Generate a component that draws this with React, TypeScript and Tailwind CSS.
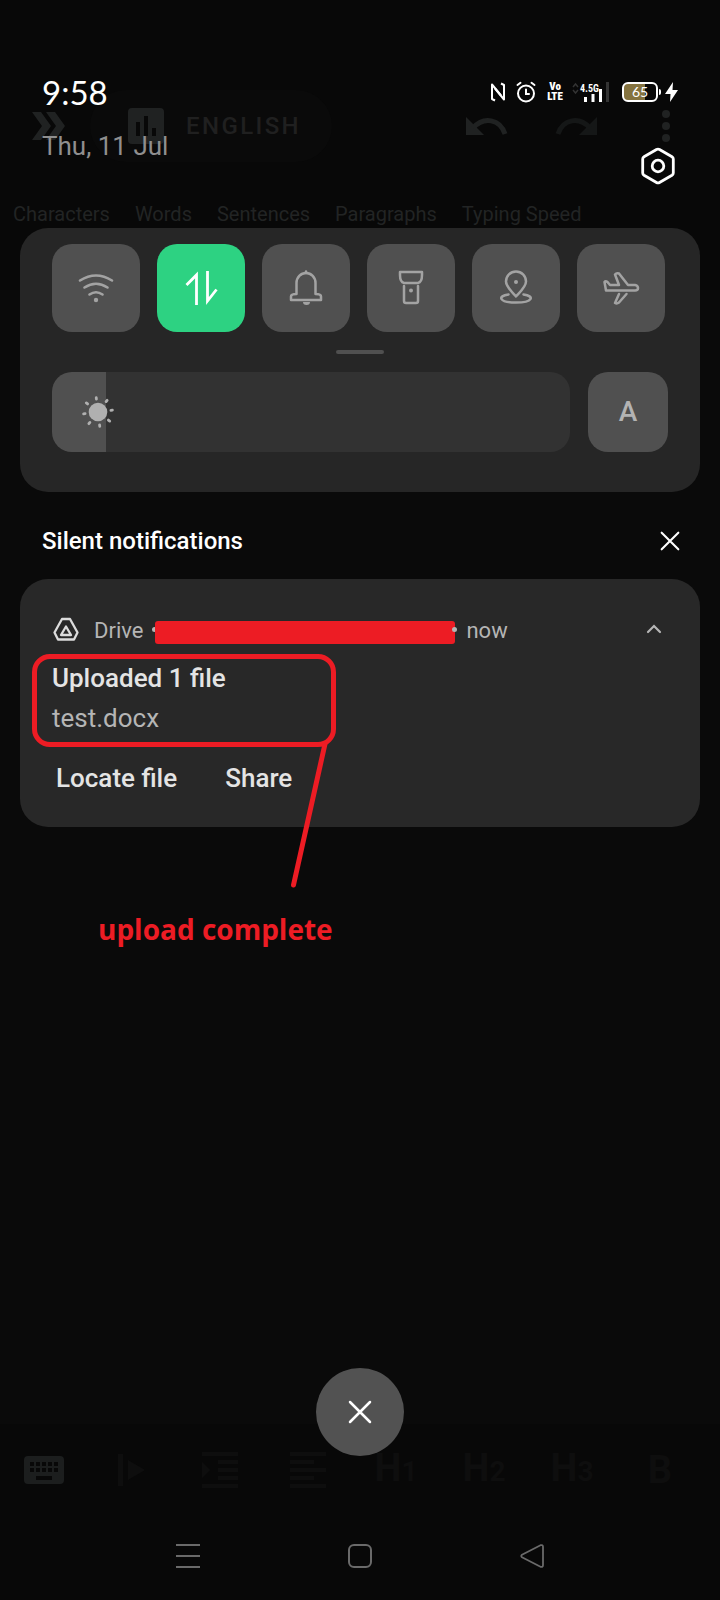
import { useState } from "react";
import type { ReactNode } from "react";

const quickTiles: { label: string; active?: boolean; icon: ReactNode }[] = [
  {
    label: "Wi-Fi",
    icon: (
      <g strokeWidth="2.600">
        <path d="M4 12.500 Q20 2.500 36 12.500" />
        <path d="M8.500 19.500 Q20 12 31.500 19.500" />
        <path d="M13.500 26.500 Q20 22 26.500 26.500" />
        <circle cx="20" cy="32" r="2.200" fill="currentColor" stroke="none" />
      </g>
    ),
  },
  {
    label: "Mobile data",
    active: true,
    icon: (
      <g strokeWidth="2.800" strokeLinecap="butt" strokeLinejoin="miter">
        <path d="M5.500 17 L15.500 7 V37" />
        <path d="M26.500 3 V33 L35.500 21.500" />
      </g>
    ),
  },
  {
    label: "Ring",
    icon: (
      <g>
        <path d="M10.500 26 V15 a9.500 10 0 0 1 19 0 V26 q5.500 0 5.500 2.500 V32 H5 V28.500 q0 -2.500 5.500 -2.500" />
        <path d="M20 3.500 V5" />
        <path d="M17 34 h7 a3.500 3 0 0 1 -7 0z" fill="currentColor" stroke="none" />
      </g>
    ),
  },
  {
    label: "Flashlight",
    icon: (
      <g>
        <path d="M9 4 H31 V7 Q31 14 27 15 H13 Q9 14 9 7 Z" />
        <path d="M13 18 V33 q0 2 2 2 H25 q2 0 2 -2 V18" />
        <circle cx="20" cy="22.500" r="2" fill="currentColor" stroke="none" />
      </g>
    ),
  },
  {
    label: "Location",
    icon: (
      <g>
        <path d="M20 28.500 C15 23 10 18.500 10 13.500 a10 10 0 0 1 20 0 C30 18.500 25 23 20 28.500 Z" />
        <circle cx="20" cy="14" r="2" fill="currentColor" stroke="none" />
        <path d="M12.500 26.500 C1 28 3 34.500 20 34.500 S39 28 27.500 26.500" />
      </g>
    ),
  },
  {
    label: "Airplane mode",
    icon: (
      <g>
        <path d="M5 22.500 L3.500 14 Q4.500 12.500 6.500 14 L9 17 H18 L14 6.500 Q15.500 4.500 18 5.500 L27 17 H34 Q37 17.500 37 20 T34 22.500 Z" />
        <path d="M18 26 L14 35 Q16 36 18 34.500 L25.500 26" />
      </g>
    ),
  },
];

const statTabs = ["Characters", "Words", "Sentences", "Paragraphs", "Typing Speed"];

function Cross({ className }: { className: string }) {
  return (
    <svg viewBox="0 0 24 24" className={className} fill="none" stroke="currentColor" strokeWidth="2.500" strokeLinecap="round" aria-hidden="true">
      <path d="M2 2 L22 22 M22 2 L2 22" />
    </svg>
  );
}

/* Editor dimmed behind the notification shade */
function DimmedEditor() {
  return (
    <div className="absolute inset-0 flex flex-col" aria-hidden="true">
      <div className="h-[290px] bg-[#080808] pt-[90px]">
        <div className="flex h-[72px] items-center pl-8">
          <svg viewBox="0 0 34 28" className="h-7 w-[34px] shrink-0" fill="#202222">
            <path d="M0 0 H9 L19 14 L9 28 H0 L10 14 Z M14 0 H23 L33 14 L23 28 H14 L24 14 Z" />
          </svg>
          <div className="ml-6 flex h-[72px] w-[242px] items-center rounded-full bg-[#0a0a0a] pl-[38px]">
            <svg viewBox="0 0 36 36" className="size-9 shrink-0">
              <rect width="36" height="36" rx="4" fill="#202222" />
              <path d="M8 14h4v14H8z M16 8h4v20h-4z M24 20h4v8h-4z" fill="#080808" />
            </svg>
            <span className="ml-[22px] text-2xl font-medium tracking-widest text-[#202020]">ENGLISH</span>
          </div>
          <svg viewBox="0 0 42 20" className="ml-auto h-5 w-[42px] shrink-0" fill="none">
            <path d="M0 1 V19 H18 Z" fill="#202222" />
            <path d="M7 12 C18 0 34 3 39 18" stroke="#202222" strokeWidth="5" />
          </svg>
          <svg viewBox="0 0 42 20" className="ml-[47px] h-5 w-[42px] shrink-0" fill="none">
            <path d="M42 1 V19 H24 Z" fill="#151717" />
            <path d="M35 12 C24 0 8 3 3 18" stroke="#151717" strokeWidth="5" />
          </svg>
          <svg viewBox="0 0 8 32" className="mr-[50px] ml-[65px] h-8 w-2 shrink-0" fill="#202222">
            <circle cx="4" cy="4" r="4" />
            <circle cx="4" cy="16" r="4" />
            <circle cx="4" cy="28" r="4" />
          </svg>
        </div>
        <div className="mt-10 flex gap-[25px] pl-[13px] text-xl leading-6 whitespace-nowrap text-[#222424]">
          {statTabs.map((t) => (
            <span key={t}>{t}</span>
          ))}
        </div>
      </div>
      <div className="flex-1" />
      <div className="h-[176px] bg-[#080808] pt-6 pr-4">
        <div className="grid h-10 grid-cols-8 place-items-center leading-10 text-[#0e0e0e]">
          <svg viewBox="0 0 40 28" className="h-7 w-10">
            <rect width="40" height="28" rx="4" fill="#1c1e1e" />
            <path d="M6 8H34 M6 14H34" stroke="#080808" strokeWidth="4" strokeDasharray="4 2" />
            <path d="M12 22H28" stroke="#080808" strokeWidth="4" />
          </svg>
          <svg viewBox="0 0 28 32" className="h-8 w-7" fill="currentColor">
            <path d="M0 0h5v32H0z M10 6 L27 16 L10 26z" />
          </svg>
          <svg viewBox="0 0 36 36" className="size-9" fill="currentColor">
            <path d="M0 0h36v4H0z M16 8h20v4H16z M16 16h20v4H16z M16 24h20v4H16z M0 32h36v4H0z M0 10l8 8-8 8z" />
          </svg>
          <svg viewBox="0 0 36 36" className="size-9" fill="currentColor">
            <path d="M0 0h36v4H0z M0 8h24v4H0z M0 16h36v4H0z M0 24h24v4H0z M0 32h36v4H0z" />
          </svg>
          {["1", "2", "3"].map((n) => (
            <span key={n} className="flex items-baseline text-[38px] font-bold">
              H<span className="text-[28px]">{n}</span>
            </span>
          ))}
          <span className="text-[38px] font-bold">B</span>
        </div>
      </div>
    </div>
  );
}

function StatusIcons() {
  return (
    <div className="flex items-center text-white">
      <svg viewBox="0 0 16 20" className="h-5 w-4" fill="none" stroke="currentColor" strokeWidth="2" strokeLinejoin="round" aria-label="NFC">
        <path d="M5 18.500 L2 17 V2.500 L11 13.500" />
        <path d="M11 1.500 L14 3 V17.500 L5 6.500" />
      </svg>
      <svg viewBox="0 0 20 22" className="ml-2.5 h-[22px] w-5" fill="none" stroke="currentColor" strokeWidth="2" strokeLinecap="round" aria-label="Alarm">
        <circle cx="10" cy="12.500" r="8" />
        <path d="M10 8.500 V13 H13 M1.500 4 L4.500 1.800 M18.500 4 L15.500 1.800" />
      </svg>
      <span className="ml-2.5 flex w-[18px] flex-col items-center font-['Roboto_Condensed','Roboto',sans-serif] text-[11px] leading-[10px] font-black">
        <span>Vo</span>
        <span>LTE</span>
      </span>
      <span className="relative ml-2 h-5 w-[38px]">
        <svg viewBox="0 0 38 20" className="h-5 w-[38px]" aria-label="Signal strength">
          <path d="M1 5 L3.500 2 L6 5 M1 8 L3.500 11 L6 8" fill="none" stroke="#333" strokeWidth="1.500" />
          <path d="M12 15h3v5h-3z M19.500 12h3v8h-3z M27 7h3v13h-3z" fill="currentColor" />
          <path d="M34 0h3v20h-3z" fill="#333" />
        </svg>
        <span className="absolute top-0.5 left-2 font-['Roboto_Condensed','Roboto',sans-serif] text-[10px] leading-[10px] font-bold">4.5G</span>
      </span>
      <span className="relative ml-3 flex h-5 w-9 items-center justify-center rounded-md border-2 border-white bg-[linear-gradient(to_right,#85733f_65%,#080808_65%)] font-['Lato',sans-serif] text-sm leading-4">
        65
      </span>
      <span className="ml-px h-1.5 w-0.5 rounded-r bg-white" />
      <svg viewBox="0 0 13 20" className="ml-1 h-5 w-[13px]" fill="currentColor" aria-label="Charging">
        <path d="M8 0 L0 12 H5.500 L5 20 L13 8 H7.500 Z" />
      </svg>
    </div>
  );
}

export default function App() {
  const [brightness, setBrightness] = useState(10.4);

  return (
    <div className="relative min-h-screen overflow-hidden bg-[#0a0a0a] font-['Roboto',sans-serif]">
      <DimmedEditor />
      <main className="relative flex min-h-screen flex-col">
        <header className="h-[228px] px-[42px] pt-[72px]">
          <div className="flex h-10 items-center justify-between">
            <time className="font-['Lato',sans-serif] text-[33px] leading-10 text-white">9:58</time>
            <StatusIcons />
          </div>
          <div className="mt-[18px] flex items-start justify-between">
            <p className="text-[26px] leading-8 text-[#8f8f8f]">Thu, 11 Jul</p>
            <button type="button" aria-label="Settings" className="mt-4 text-white">
              <svg viewBox="0 0 40 40" className="size-10" fill="none" stroke="currentColor" strokeWidth="2.800" strokeLinejoin="round">
                <path d="M18.500 3.500 Q20 2.600 21.500 3.500 L34 10.800 Q35.300 11.600 35.300 13 V27 Q35.300 28.400 34 29.200 L21.500 36.500 Q20 37.400 18.500 36.500 L6 29.200 Q4.700 28.400 4.700 27 V13 Q4.700 11.600 6 10.800 Z" />
                <circle cx="20" cy="20" r="5.800" />
              </svg>
            </button>
          </div>
        </header>

        <section aria-label="Quick settings" className="mx-5 rounded-[28px] bg-[#262626] px-8 pt-4 pb-10">
          <div className="grid grid-cols-6 gap-[17px] pr-[3px]">
            {quickTiles.map((t) => (
              <button
                key={t.label}
                type="button"
                aria-label={t.label}
                aria-pressed={!!t.active}
                className={`flex h-[88px] items-center justify-center rounded-[20px] ${
                  t.active ? "bg-[#2dd282] text-white" : "bg-[#505050] text-[#a3a3a3]"
                }`}
              >
                <svg viewBox="0 0 40 40" className="size-10" fill="none" stroke="currentColor" strokeWidth="2.500" strokeLinecap="round" strokeLinejoin="round">
                  {t.icon}
                </svg>
              </button>
            ))}
          </div>
          <div className="mx-auto mt-[18px] h-1 w-12 rounded-sm bg-[#505050]" />
          <div className="mt-[18px] flex gap-[18px]">
            <div className="relative h-20 flex-1">
              <input
                type="range"
                aria-label="Brightness"
                min="0"
                max="100"
                step="0.1"
                value={brightness}
                onChange={(e) => setBrightness(Number(e.target.value))}
                className="block h-20 w-full appearance-none rounded-[20px] [&::-webkit-slider-thumb]:opacity-0"
                style={{ background: `linear-gradient(to right, #505050 ${brightness}%, #323232 ${brightness}%)` }}
              />
              <svg viewBox="0 0 36 36" className="pointer-events-none absolute top-[22px] left-7 size-9" fill="none" stroke="#b0b0b0" strokeWidth="2.800" strokeLinecap="round">
                <circle cx="18" cy="18" r="9.300" fill="#b0b0b0" stroke="none" />
                <path
                  d="M18 5V3.500 M18 31V32.500 M5 18H3.500 M31 18H32.500 M8.700 8.700L7.500 7.500 M27.300 27.300L28.500 28.500 M8.700 27.300L7.500 28.500 M27.300 8.700L28.500 7.500"
                  transform="rotate(-7 18 18)"
                />
              </svg>
            </div>
            <button type="button" aria-label="Auto brightness" className="size-20 rounded-[20px] bg-[#505050] text-[28px] font-medium text-[#b3b3b3]">
              A
            </button>
          </div>
        </section>

        <div className="flex h-[87px] items-center justify-between pt-2.5 pr-[34px] pl-[42px] text-white">
          <h2 className="text-2xl font-medium">Silent notifications</h2>
          <button type="button" aria-label="Clear silent notifications" className="flex size-8 items-center justify-center">
            <Cross className="size-5" />
          </button>
        </div>

        <article className="mx-5 rounded-[28px] bg-[#282828] px-8 pt-[34px] pb-[29px]">
          <div className="flex h-8 items-center text-[22px] leading-8 text-[#b5b5b5]">
            <svg viewBox="0 0 26 24" className="ml-px h-6 w-[26px]" fill="none" stroke="#dcdcdc" strokeWidth="2.300" strokeLinejoin="round" aria-hidden="true">
              <path d="M9 2 H17 L24.500 15.500 L21 22.500 H5 L1.500 15.500 Z" />
              <path d="M13 9.500 L18 18 H8 Z" />
            </svg>
            <span className="mt-1 ml-[15px]">Drive</span>
            <span className="ml-[9px] size-[5px] rounded-full bg-[#b5b5b5]" />
            <span className="-ml-0.5 mt-1.5 h-[23px] w-[300px] rounded-[3px] bg-[#ed1c24]" />
            <span className="z-10 -ml-[3px] size-[5px] rounded-full bg-[#b5b5b5]" />
            <span className="mt-1 ml-[9px]">now</span>
            <button type="button" aria-label="Collapse" className="-mr-0.5 ml-auto flex size-8 items-center justify-center">
              <svg viewBox="0 0 16 10" className="h-2.5 w-4" fill="none" stroke="currentColor" strokeWidth="2.200" strokeLinecap="round">
                <path d="M2 8 L8 2 L14 8" />
              </svg>
            </button>
          </div>
          <div className="relative mt-[13px] text-[26px] leading-10">
            <h3 className="font-medium text-[#e4e4e4]">Uploaded 1 file</h3>
            <p className="text-[#b5b5b5]">test.docx</p>
            <div className="pointer-events-none absolute -top-1 -left-5 h-[93px] w-[304px] rounded-[18px] border-5 border-[#ed1c24]" />
            <svg viewBox="0 0 42 150" className="pointer-events-none absolute top-[82px] left-[236px] h-[150px] w-[42px]" aria-hidden="true">
              <path d="M37 4 L5.500 145" stroke="#ed1c24" strokeWidth="5" strokeLinecap="round" />
            </svg>
          </div>
          <div className="mt-5 flex gap-12 pl-1 text-[26px] leading-10 font-medium text-[#e4e4e4]">
            <button type="button">Locate file</button>
            <button type="button">Share</button>
          </div>
        </article>

        <p className="mt-[82px] ml-[98px] font-['Open_Sans','Noto_Sans',sans-serif] text-[28px] leading-10 font-bold text-[#ed1c24]">
          upload complete
        </p>

        <button type="button" aria-label="Clear all" className="mx-auto mt-auto mb-[68px] flex size-[88px] items-center justify-center rounded-full bg-[#525252] text-white">
          <Cross className="size-6" />
        </button>

        <nav aria-label="System" className="mb-3 grid h-16 grid-cols-3 px-[102px] text-[#6a6a6a]">
          <button type="button" aria-label="Recent apps" className="flex items-center justify-center">
            <svg viewBox="0 0 24 24" className="size-6" stroke="currentColor" strokeWidth="2">
              <path d="M0 1H24 M0 12H24 M0 23H24" />
            </svg>
          </button>
          <button type="button" aria-label="Home" className="flex items-center justify-center">
            <span className="size-6 rounded-md border-2 border-current" />
          </button>
          <button type="button" aria-label="Back" className="flex items-center justify-center">
            <svg viewBox="0 0 24 24" className="size-6" fill="none" stroke="currentColor" strokeWidth="1.800" strokeLinejoin="round">
              <path d="M2 10.800 L20.500 1.200 Q23 0.600 23 3 V21 Q23 23.400 20.500 22.800 L2 13.200 Q0.500 12 2 10.800 Z" />
            </svg>
          </button>
        </nav>
      </main>
    </div>
  );
}
